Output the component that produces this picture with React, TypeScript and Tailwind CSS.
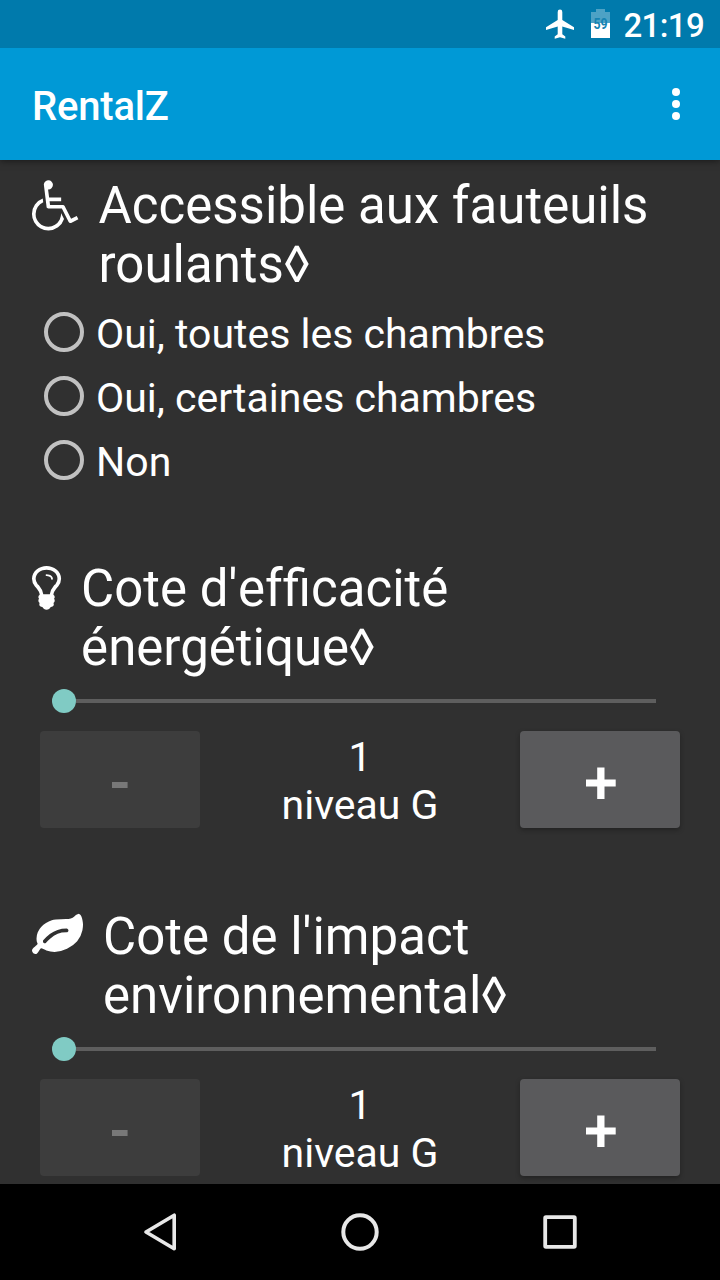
import type { ReactNode } from "react";

const WHEELCHAIR =
  "M1023 349l102 -204q-58 -179 -210 -290t-339 -111q-156 0 -289.5 77.5t-211 211t-77.5 289.5q0 181 104.5 330t274.5 211l17 -131q-122 -54 -195 -165.5t-73 -244.5q0 -185 131.5 -316.5t316.5 -131.5q126 0 232.5 65t165 175.5t49.5 236.5zM1571 249l58 -114l-256 -128q-13 -7 -29 -7q-40 0 -57 35l-239 477h-472q-24 0 -42.5 16.5t-21.5 40.5l-96 779q-2 16 6 42q14 51 57 82.5t97 31.5q66 0 113 -47t47 -113q0 -69 -52 -117.5t-120 -41.5l37 -289h423v-128h-407l16 -128h455q40 0 57 -35l228 -455z";
const BULB =
  "M736 960q0 -13 -9.5 -22.5t-22.5 -9.5t-22.5 9.5t-9.5 22.5q0 46 -54 71t-106 25q-13 0 -22.5 9.5t-9.5 22.5t9.5 22.5t22.5 9.5q50 0 99.5 -16t87 -54t37.5 -90zM896 960q0 72 -34.5 134t-90 101.5t-123 62t-136.5 22.5t-136.5 -22.5t-123 -62t-90 -101.5t-34.5 -134q0 -101 68 -180q10 -11 30.5 -33t30.5 -33q128 -153 141 -298h228q13 145 141 298q10 11 30.5 33t30.5 33q68 79 68 180zM1024 960q0 -155 -103 -268q-45 -49 -74.5 -87t-59.5 -95.5t-34 -107.5q47 -28 47 -82q0 -37 -25 -64q25 -27 25 -64q0 -52 -45 -81q13 -23 13 -47q0 -46 -31.5 -71t-77.5 -25q-20 -44 -60 -70t-87 -26t-87 26t-60 70q-46 0 -77.5 25t-31.5 71q0 24 13 47q-45 29 -45 81q0 37 25 64q-25 27 -25 64q0 54 47 82q-4 50 -34 107.5t-59.5 95.5t-74.5 87q-103 113 -103 268q0 99 44.5 184.5t117 142t164 89t186.5 32.5t186.5 -32.5t164 -89t117 -142t44.5 -184.5z";
const LEAF =
  "M1280 832q0 26 -19 45t-45 19q-172 0 -318 -49.5t-259.5 -134t-235.5 -219.5q-19 -21 -19 -45q0 -26 19 -45t45 -19q24 0 45 19q27 24 74 71t67 66q137 124 268.5 176t313.5 52q26 0 45 19t19 45zM1792 1030q0 -95 -20 -193q-46 -224 -184.5 -383t-357.5 -268q-214 -108 -438 -108q-148 0 -286 47q-15 5 -88 42t-96 37q-16 0 -39.5 -32t-45 -70t-52.5 -70t-60 -32q-43 0 -63.5 17.5t-45.5 59.5q-2 4 -6 11t-5.5 10t-3 9.5t-1.5 13.5q0 35 31 73.5t68 65.5t68 56t31 48q0 4 -14 38t-16 44q-9 51 -9 104q0 115 43.5 220t119 184.5t170.5 139t204 95.5q55 18 145 25.5t179.5 9t178.5 6t163.5 24t113.5 56.5l29.5 29.5t29.5 28t27 20t36.5 16t43.5 4.5q39 0 70.5 -46t47.5 -112t24 -124t8 -96z";

function Heading({ icon, iconClass, units, children }: { icon: string; iconClass: string; units: number; children: ReactNode }) {
  return (
    <div className="flex h-[118px] items-start pl-8">
      <svg className={`mt-[3px] h-[51px] shrink-0 overflow-visible ${iconClass}`} viewBox={`0 0 ${units} 1792`} fill="#fff">
        <path transform="matrix(1 0 0 -1 0 1550)" d={icon} />
      </svg>
      <h2 className="text-[51px] leading-[59px] whitespace-nowrap">{children}</h2>
    </div>
  );
}

function Radio({ label }: { label: string }) {
  return (
    <label className="flex h-16 items-center pl-11">
      <span className="size-10 rounded-full border-4 border-[#c1c1c1]" />
      <span className="ml-3 pt-1 text-[41px] leading-[48px] whitespace-nowrap">{label}</span>
    </label>
  );
}

function Rating() {
  return (
    <div>
      <div className="flex h-12 items-center pr-16 pl-[52px]">
        <span className="size-6 shrink-0 rounded-full bg-[#80cbc4]" />
        <span className="h-1 grow bg-[#5e5e5e]" />
      </div>
      <div className="mt-[6px] flex h-[97px] justify-between px-10">
        <button className="flex w-40 items-center justify-center rounded-[4px] bg-[#3d3d3d] pt-[11px]">
          <svg className="h-[6px] w-4" viewBox="0 0 16 6"><path d="M0 0h15.6v6H0z" fill="#787878" /></svg>
        </button>
        <div className="pt-[2px] text-center text-[41px] leading-[48px]">
          <div>1</div>
          <div>niveau G</div>
        </div>
        <button className="flex w-40 items-center justify-center rounded-[4px] bg-[#5a5a5c] pt-[6px] pl-[2px] shadow-[0_2px_5px_rgba(0,0,0,0.3)]">
          <svg className="h-8 w-[30px]" viewBox="0 0 30 32"><path d="M11.2 .5h7.3v12h11.2v7H18.5V32h-7.3V19.5H0v-7h11.2z" fill="#fff" /></svg>
        </button>
      </div>
    </div>
  );
}

export default function App() {
  return (
    <div className="flex h-[1280px] w-[720px] flex-col overflow-hidden bg-[#303030] font-['Roboto',sans-serif] text-white">
      <div className="z-20 flex h-12 shrink-0 items-center justify-end bg-[#007aac] pr-4">
        <svg className="size-8" viewBox="0 0 32 32" fill="#fff">
          <path d="M30 21.6v-2.8L18.3 11.5V3.4a2.3 2.3 0 0 0-4.6 0v8.1L2 18.8v2.8l11.7-3.7v7.9l-3 2.2v2.3L16 28.7l5.3 1.6V28l-3-2.2v-7.9z" transform="translate(0 .5)" />
        </svg>
        <svg className="ml-[15px] h-[30px] w-[19px] overflow-visible" viewBox="0 0 19 30">
          <path d="M5 0h9v3h5v11H0V3h5z" fill="#4da2c5" />
          <path d="M0 14h19v15H0z" fill="#fff" />
          <text transform="translate(9.5 20) scale(.85 1)" textAnchor="middle" fontSize="14.5" fontWeight="700" fill="#1583b2" fontFamily="Roboto">59</text>
        </svg>
        <span className="ml-[14px] pt-[3px] text-[33px] leading-[38px] font-medium tracking-[-0.65px]">21:19</span>
      </div>
      <header className="z-10 flex h-28 shrink-0 items-center justify-between bg-[#0099d6] pr-10 pl-8 shadow-[0_1px_7px_rgba(0,0,0,0.5)]">
        <h1 className="pt-[6px] text-[40px] leading-[48px] font-medium tracking-[-0.2px]">RentalZ</h1>
        <svg className="h-8 w-2" viewBox="0 0 8 32" fill="#fff">
          <circle cx="4" cy="4" r="4" /><circle cx="4" cy="16" r="4" /><circle cx="4" cy="28" r="4" />
        </svg>
      </header>
      <main className="min-h-0 grow overflow-hidden pt-4">
        <Heading icon={WHEELCHAIR} iconClass="w-[47.4px] mr-[19.2px]" units={1664}>Accessible aux fauteuils<br />roulants◊</Heading>
        <div className="mt-[6px]">
          <Radio label="Oui, toutes les chambres" />
          <Radio label="Oui, certaines chambres" />
          <Radio label="Non" />
        </div>
        <div className="mt-[67px]">
          <Heading icon={BULB} iconClass="w-[29.1px] mr-[20px]" units={1024}>Cote <span className="[font-kerning:none]">d'</span><span className="ml-[0.5px] [font-kerning:none]">ef</span>ficacité<br />énergétique◊</Heading>
          <Rating />
        </div>
        <div className="mt-[79px]">
          <Heading icon={LEAF} iconClass="w-[51px] mr-[20px]" units={1792}>Cote de <span className="mr-[1px] [font-kerning:none]">l'</span>impact<br />environnemental◊</Heading>
          <Rating />
        </div>
      </main>
      <nav className="flex h-24 shrink-0 items-center justify-center gap-[136px] bg-black">
        <svg className="size-16" viewBox="0 0 64 64" fill="none" stroke="#e8e8e8" strokeWidth="3.6" strokeLinejoin="round"><path d="M46.2 15.2v33.6L18 32z" /></svg>
        <svg className="size-16" viewBox="0 0 64 64" fill="none" stroke="#e8e8e8" strokeWidth="4"><circle cx="32" cy="32" r="16.7" /></svg>
        <svg className="size-16" viewBox="0 0 64 64" fill="none" stroke="#e8e8e8" strokeWidth="3.8"><rect x="17.2" y="17.2" width="29.6" height="29.6" rx="0.8" /></svg>
      </nav>
    </div>
  );
}
